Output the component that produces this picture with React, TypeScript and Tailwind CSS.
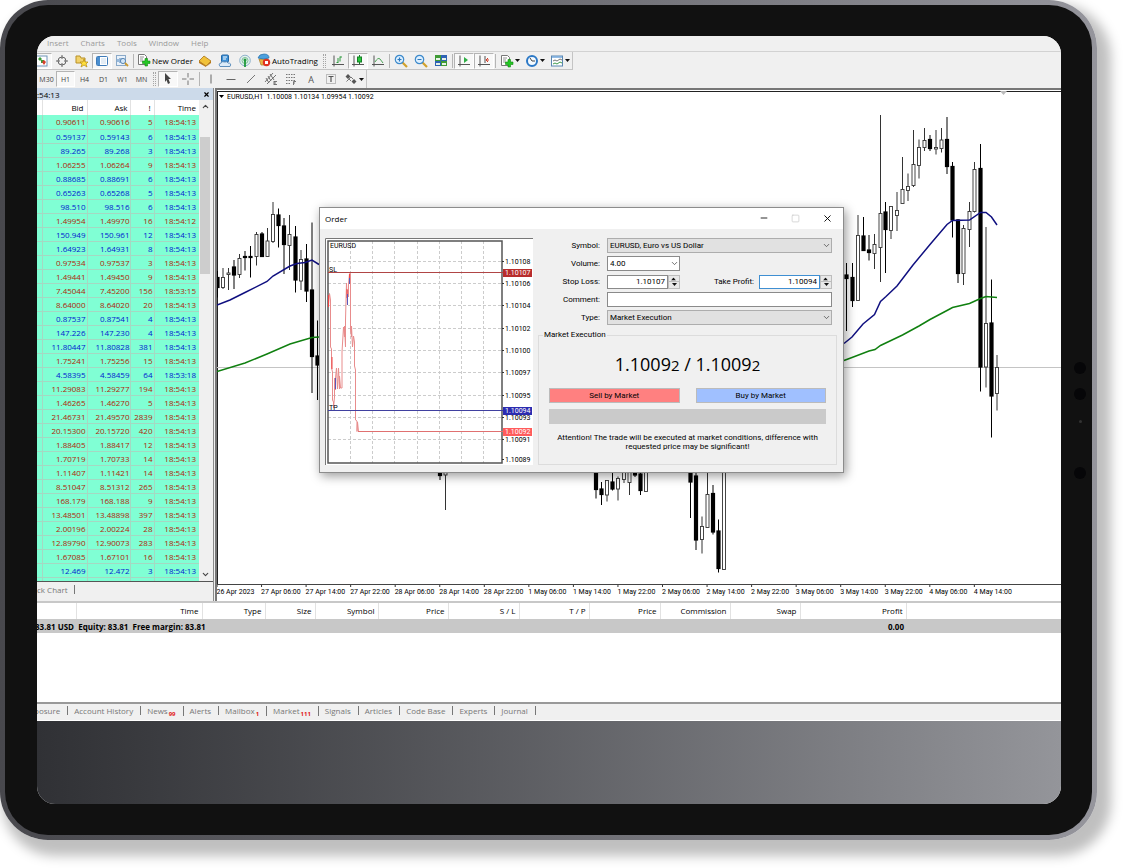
import type { ReactNode } from "react";
import { ChevronDown, ChevronUp, Minus, Square, X } from "lucide-react";

type Quote = [bid: string, ask: string, spread: string, time: string, up: boolean];

const quotes: Quote[] = [
  ["0.90611", "0.90616", "5", "18:54:13", false],
  ["0.59137", "0.59143", "6", "18:54:13", true],
  ["89.265", "89.268", "3", "18:54:13", true],
  ["1.06255", "1.06264", "9", "18:54:13", false],
  ["0.88685", "0.88691", "6", "18:54:13", true],
  ["0.65263", "0.65268", "5", "18:54:13", true],
  ["98.510", "98.516", "6", "18:54:13", true],
  ["1.49954", "1.49970", "16", "18:54:12", false],
  ["150.949", "150.961", "12", "18:54:13", true],
  ["1.64923", "1.64931", "8", "18:54:13", true],
  ["0.97534", "0.97537", "3", "18:54:13", false],
  ["1.49441", "1.49450", "9", "18:54:13", false],
  ["7.45044", "7.45200", "156", "18:53:15", false],
  ["8.64000", "8.64020", "20", "18:54:13", false],
  ["0.87537", "0.87541", "4", "18:54:13", true],
  ["147.226", "147.230", "4", "18:54:13", true],
  ["11.80447", "11.80828", "381", "18:54:13", true],
  ["1.75241", "1.75256", "15", "18:54:13", false],
  ["4.58395", "4.58459", "64", "18:53:18", true],
  ["11.29083", "11.29277", "194", "18:54:13", false],
  ["1.46265", "1.46270", "5", "18:54:13", false],
  ["21.46731", "21.49570", "2839", "18:54:13", false],
  ["20.15300", "20.15720", "420", "18:54:13", false],
  ["1.88405", "1.88417", "12", "18:54:13", false],
  ["1.70719", "1.70733", "14", "18:54:13", false],
  ["1.11407", "1.11421", "14", "18:54:13", false],
  ["8.51047", "8.51312", "265", "18:54:13", false],
  ["168.179", "168.188", "9", "18:54:13", false],
  ["13.48501", "13.48898", "397", "18:54:13", false],
  ["2.00196", "2.00224", "28", "18:54:13", false],
  ["12.89790", "12.90073", "283", "18:54:13", false],
  ["1.67085", "1.67101", "16", "18:54:13", false],
  ["12.469", "12.472", "3", "18:54:13", true],
  ["0.95621", "0.95661", "40", "18:54:13", true],
];

// x, high, body top, body bottom, low, bearish
type Candle = [number, number, number, number, number, 0 | 1];

const candles: Candle[] = [
  [217.5, 271, 277.5, 287.5, 297.5, 1], [223, 268, 277.5, 287.5, 289, 0], [228.5, 268, 273, 274.5, 290, 0],
  [234, 260, 267, 275, 289, 1], [239.5, 254, 258.5, 274.5, 278, 0], [245, 251, 256.5, 257.5, 270.5, 1],
  [250.5, 246, 256.5, 257.5, 277.5, 1], [256.5, 232, 234.5, 256.5, 265.5, 0], [262, 232, 234, 256.5, 257, 1],
  [267.5, 228, 241, 256.5, 257, 0], [273, 202, 214.5, 241.5, 243, 0], [278.5, 208.5, 215, 225.5, 247.5, 1],
  [284, 218, 226, 244.5, 274, 1], [289.5, 215, 234.5, 245.5, 270, 0], [295.5, 226, 237, 280, 292.5, 1],
  [301, 250, 259.5, 281, 290, 0], [306.5, 244, 259, 291, 302, 1], [312, 222.5, 290, 356.5, 393, 1],
  [317.5, 320.5, 356, 365, 400, 1],
  [440, 470, 470, 475.5, 480, 1], [445.5, 470, 470, 475, 510, 0],
  [596, 470, 470, 489.5, 498.5, 1], [601.5, 482, 489, 494.5, 505, 1], [607, 480, 480.5, 495, 501.5, 0],
  [612.5, 472, 482, 489, 490.5, 1], [618, 476.5, 478.5, 489, 500.5, 0], [624, 470, 470, 479.5, 483, 0],
  [629.5, 470, 470, 482.5, 495, 0], [635, 470, 470, 475, 477, 1], [640.5, 472.5, 474, 490.5, 495, 1],
  [646, 470, 470, 491.5, 491.5, 0],
  [690.5, 470, 470, 482, 518, 1], [696, 470, 476, 540, 550, 1], [702, 516.5, 526.5, 539.5, 553.5, 0],
  [707.5, 470, 494.5, 527.5, 527.5, 0], [713, 485, 493.5, 532, 534.5, 1], [718.5, 519.5, 531, 568.5, 572.5, 1],
  [724, 470, 470, 569.5, 569.5, 0],
  [846.5, 263, 275, 278.5, 331, 1], [852.5, 263, 277.5, 300.5, 307, 1], [858, 215, 235.5, 300.5, 300.5, 0],
  [863.5, 217, 236, 250.5, 250.5, 1], [869, 235, 250, 252.5, 260.5, 1], [874.5, 234, 244.5, 253.5, 269, 0],
  [880.5, 115, 213.5, 247.5, 282, 0], [885.5, 202, 212, 229.5, 273, 1], [891, 206, 206.5, 230.5, 239, 0],
  [897, 192, 210.5, 215.5, 231, 0], [902.5, 157, 189.5, 203.5, 203.5, 0], [908, 173.5, 186.5, 190.5, 201, 0],
  [913.5, 130, 164.5, 185.5, 187, 0], [919, 139.5, 147.5, 165.5, 178.5, 0], [924.5, 128, 140.5, 147.5, 151, 0],
  [930, 135, 139.5, 148.5, 151, 1], [936, 130, 147.5, 149, 154.5, 0], [941.5, 128, 140, 148.5, 152.5, 0],
  [947, 117, 139.5, 166.5, 174, 1], [952.5, 162, 166.5, 220, 237.5, 1], [958, 219, 220, 273.5, 283, 1],
  [963.5, 225, 228.5, 273.5, 285, 0], [969.5, 202, 211.5, 229.5, 247, 0], [974.5, 162, 169.5, 211.5, 212.5, 0],
  [980.5, 144, 168.5, 367, 391.5, 1], [986, 227, 323.5, 367, 387.5, 0], [991.5, 279.5, 323, 396, 437.5, 1],
  [997, 355, 367.5, 393.5, 410.5, 0],
];

const timeTicks = [
  "26 Apr 2023", "27 Apr 06:00", "27 Apr 14:00", "27 Apr 22:00", "28 Apr 06:00", "28 Apr 14:00",
  "28 Apr 22:00", "1 May 06:00", "1 May 14:00", "1 May 22:00", "2 May 06:00", "2 May 14:00",
  "2 May 22:00", "3 May 06:00", "3 May 14:00", "3 May 22:00", "4 May 06:00", "4 May 14:00",
];

const menus = ["Insert", "Charts", "Tools", "Window", "Help"];
const periods = ["M30", "H1", "H4", "D1", "W1", "MN"];

const terminalTabs: { label: string; badge?: string }[] = [
  { label: "posure" },
  { label: "Account History" },
  { label: "News", badge: "99" },
  { label: "Alerts" },
  { label: "Mailbox", badge: "1" },
  { label: "Market", badge: "111" },
  { label: "Signals" },
  { label: "Articles" },
  { label: "Code Base" },
  { label: "Experts" },
  { label: "Journal" },
];

const icons: Record<string, ReactNode> = {
  watch: (
    <>
      <rect x="1" y="2" width="11" height="10" fill="#fff" stroke="#6f93b8" />
      <path d="M3 5l2-2 2 2-2 2zM6 6h3v3H6z" fill="#3b9b3b" />
      <path d="M7 8l2-2 2 2-2 3z" fill="#d6402c" />
    </>
  ),
  target: (
    <g fill="none" stroke="#666">
      <circle cx="7" cy="7" r="4" />
      <path d="M7 1v4M7 9v4M1 7h4M9 7h4" />
    </g>
  ),
  folder: (
    <>
      <path d="M1 2h4l1 2h4v5H1z" fill="#f2d26b" stroke="#b89128" />
      <path d="M9 5l1 3h3l-2 2 1 3-3-2-3 2 1-3-2-2h3z" fill="#ffdf3d" stroke="#b58a10" strokeWidth=".7" />
    </>
  ),
  panel: (
    <>
      <rect x="1.5" y="2.5" width="11" height="9" rx="1" fill="#fff" stroke="#3d7ab8" />
      <path d="M2 3h3v8H2z" fill="#4b8fd0" />
      <path d="M6 5h5M6 7h5M6 9h5" stroke="#b9cfe5" strokeWidth=".8" />
    </>
  ),
  tester: (
    <>
      <rect x="1.5" y="1.5" width="9" height="10" fill="#e8f1fa" stroke="#8aa9c8" />
      <path d="M3 8V5M5 9V4M7 7V4" stroke="#4681bc" />
      <circle cx="8" cy="7" r="2.6" fill="#cfe5f8" stroke="#5c88b4" />
      <path d="M10 9l3 3" stroke="#c99b32" strokeWidth="1.8" />
    </>
  ),
  order: (
    <>
      <path d="M1.500 1.500h6l2 2v8h-8z" fill="#fff" stroke="#777" />
      <path d="M3 4h4M3 6h3M3 8h3" stroke="#888" strokeWidth=".9" />
      <path d="M8 5.500h2.500V8H13v2.500h-2.500V13H8v-2.500H5.500V8H8z" fill="#24c724" stroke="#138a13" strokeWidth=".6" />
    </>
  ),
  book: (
    <>
      <path d="M1 7l5-5 7 5-5 5z" fill="#f1c23a" stroke="#a7741a" strokeWidth=".8" />
      <path d="M1 7v2l7 4v-1zM13 7v2l-5 4" fill="#b97816" />
    </>
  ),
  vps: (
    <>
      <rect x="3.500" y="1" width="7" height="7" rx="1" fill="#3f92d8" stroke="#2367a6" />
      <path d="M5 3h4M5 5h3" stroke="#fff" />
      <path d="M2 12.500q-2-3 1-3.500 1-2 4-1 2-1 3 1 4 0 2 3.500z" fill="#dcebf8" stroke="#5e8fbd" />
    </>
  ),
  signal: (
    <>
      <g fill="none" stroke="#8fb2cc">
        <circle cx="7" cy="6.500" r="5.300" fill="#e2f1ec" />
        <circle cx="7" cy="6.500" r="3" stroke="#7bbd98" />
      </g>
      <path d="M7 6v7" stroke="#1f9a3c" strokeWidth="1.800" />
      <circle cx="7" cy="6" r="1.500" fill="#1f9a3c" />
    </>
  ),
  robot: (
    <>
      <path d="M2 6h9l-1 6H4z" fill="#e9b446" stroke="#a87f27" strokeWidth=".7" />
      <path d="M1 5q1-4 6-4t5 4q-5 2-11 0z" fill="#4ba0dd" stroke="#2a6fa8" strokeWidth=".7" />
      <circle cx="9.500" cy="9.500" r="3.700" fill="#e03220" />
      <rect x="8" y="8" width="3" height="3" fill="#fff" />
    </>
  ),
  bars: (
    <>
      <path d="M3 1.500v11M1 10.500h12" stroke="#555" />
      <path d="M7 4v5M5.500 8.500H7M9 2.500v5M9 3h2" stroke="#2f9a3f" />
    </>
  ),
  candle: (
    <>
      <path d="M3 1.500v11M1 10.500h12" stroke="#555" />
      <path d="M8.500 1v9" stroke="#157d25" />
      <rect x="6.500" y="3" width="4" height="5" fill="#27c93c" stroke="#157d25" />
    </>
  ),
  line: (
    <>
      <path d="M3 1.500v11M1 10.500h12" stroke="#555" />
      <path d="M4 8q3-5 5-3l3 4" fill="none" stroke="#4ca457" />
    </>
  ),
  zoomIn: (
    <>
      <path d="M8 8l5 5" stroke="#d1a12c" strokeWidth="2.200" />
      <circle cx="5.500" cy="5.500" r="4.200" fill="#dcefff" stroke="#3d8acb" strokeWidth="1.200" />
      <path d="M3.500 5.500h4M5.500 3.500v4" stroke="#2d78bc" strokeWidth="1.200" />
    </>
  ),
  zoomOut: (
    <>
      <path d="M8 8l5 5" stroke="#d1a12c" strokeWidth="2.200" />
      <circle cx="5.500" cy="5.500" r="4.200" fill="#dcefff" stroke="#3d8acb" strokeWidth="1.200" />
      <path d="M3.500 5.500h4" stroke="#2d78bc" strokeWidth="1.200" />
    </>
  ),
  tile: (
    <>
      <path d="M1 1h6v6H1zM7 7h6v5H7z" fill="#3f9a35" />
      <path d="M7 1h6v6H7zM1 7h6v5H1z" fill="#2e62b4" />
      <path d="M2 4h4v2H2zM8 4h4v2H8zM2 9h4v2H2zM8 9h4v2H8z" fill="#e6f2e6" />
    </>
  ),
  shift: (
    <>
      <path d="M3 1.500v11M1 10.500h12" stroke="#555" />
      <path d="M7 3l4 3-4 3z" fill="#2fae45" />
    </>
  ),
  autoScroll: (
    <>
      <path d="M3 1.500v11M1 10.500h12M8 2v7" stroke="#555" />
      <path d="M12 6H9M11 4L9 6l2 2" fill="none" stroke="#d33a25" />
    </>
  ),
  clock: (
    <>
      <circle cx="7" cy="7" r="5" fill="#f4faff" stroke="#2b78c6" strokeWidth="2" />
      <path d="M5 4l2 3h3" fill="none" stroke="#444" />
    </>
  ),
  template: (
    <>
      <rect x="1.500" y="2" width="11" height="10" fill="#fff" stroke="#5a86b0" />
      <path d="M2 3h10" stroke="#72a7dc" strokeWidth="1.600" />
      <path d="M3 7l2-1 2 1 3-2 2 1" fill="none" stroke="#777" />
      <path d="M3 10l2-1 2 1 3-2 2 1" fill="none" stroke="#3f9a4a" />
    </>
  ),
  cursor: <path d="M4 1l6 6H7.500L9 11l-2 1-1.500-4L4 10z" fill="#444" />,
  cross: <path d="M7 1v4.500M7 8.500V13M1 7h4.500M8.500 7H13" stroke="#777" />,
  vline: <path d="M7 2.500v9" stroke="#666" />,
  hline: <path d="M2.500 7.500h9" stroke="#666" />,
  slash: <path d="M3 11l8-8" stroke="#777" />,
  channel: (
    <path d="M1 10L9 1M3 12l9-9M2 6l3 5M4 4l3 5M6 2l4 6M10 9v4M10 9.500h3M10 11h2M10 12.500h3" fill="none" stroke="#666" strokeWidth=".9" />
  ),
  fibo: (
    <g stroke="#777">
      <path d="M2 2.500h10M2 5.500h10M2 8.500h10M2 11.500h5" strokeDasharray="1.500 1" />
      <path d="M9.500 13V9.500H12M9.500 11H11" fill="none" />
    </g>
  ),
  label: (
    <>
      <rect x="2.500" y="2.500" width="9" height="9" fill="none" stroke="#888" strokeDasharray="1 1" />
      <path d="M4.500 4.500h5M7 4.500V10" stroke="#555" strokeWidth="1.200" />
    </>
  ),
  arrows: (
    <>
      <path d="M4 2l2.500 2.500L4 7 1.500 4.500zM10 7l2.500 2.500L10 12 7.500 9.500z" fill="#555" />
      <path d="M2.500 9.500L7 5l2 2M7 9l-2-2" fill="none" stroke="#777" />
    </>
  ),
};

function ToolButton({ icon, label, pressed, drop }: { icon: string; label: string; pressed?: boolean; drop?: boolean }) {
  return (
    <button
      aria-label={label}
      className={`flex h-4 shrink-0 items-center justify-center ${drop ? "w-[25px] gap-px" : "w-5"} ${
        pressed ? "border border-[#b4b4b4] border-r-white border-b-white bg-[#f8f8f8]" : ""
      }`}
    >
      <svg viewBox="0 0 14 14" className="size-[14px] shrink-0">
        {icons[icon]}
      </svg>
      {drop && <Caret />}
    </button>
  );
}

function Caret() {
  return (
    <svg viewBox="0 0 5 3" className="h-[3px] w-[5px] shrink-0">
      <path d="M0 0h5L2.500 3z" fill="#111" />
    </svg>
  );
}

function Divider() {
  return <span className="mx-px h-[14px] w-px shrink-0 bg-[#b5b5b5]" />;
}

function Grip() {
  return <span className="mx-[2px] h-[14px] w-[3px] shrink-0 border-x border-dotted border-[#a5a5a5]" />;
}

function Toolbars() {
  return (
    <header className="bg-[#f0f0f0]">
      <nav className="flex h-[15px] items-center gap-3 pb-[2px] pl-[10px] text-[8px] text-[#9a9a9a]">
        {menus.map((m) => (
          <button key={m}>{m}</button>
        ))}
      </nav>
      <div className="flex border-t border-[#d2d2d2]">
        <div className="-ml-[5px] flex h-[18px] items-center border-r border-b border-[#c4c4c4]">
          <ToolButton icon="watch" label="Market Watch" pressed />
          <ToolButton icon="target" label="Data Window" />
          <ToolButton icon="folder" label="Navigator" />
          <ToolButton icon="panel" label="Terminal" pressed />
          <ToolButton icon="tester" label="Strategy Tester" />
          <Divider />
          <button className="flex w-[60px] shrink-0 items-center gap-px pb-px pl-[2px] text-[8px] whitespace-nowrap text-black">
            <svg viewBox="0 0 14 14" className="size-[14px] shrink-0">{icons.order}</svg>
            New Order
          </button>
          <ToolButton icon="book" label="MetaEditor" />
          <ToolButton icon="vps" label="VPS" />
          <ToolButton icon="signal" label="Signals" />
          <button className="flex w-[66px] shrink-0 items-center gap-px pb-px pl-[2px] text-[8px] whitespace-nowrap text-black">
            <svg viewBox="0 0 14 14" className="size-[14px] shrink-0">{icons.robot}</svg>
            AutoTrading
          </button>
          <Grip />
          <ToolButton icon="bars" label="Bar Chart" />
          <ToolButton icon="candle" label="Candlesticks" pressed />
          <ToolButton icon="line" label="Line Chart" />
          <Divider />
          <ToolButton icon="zoomIn" label="Zoom In" />
          <ToolButton icon="zoomOut" label="Zoom Out" />
          <ToolButton icon="tile" label="Tile Windows" />
          <Divider />
          <ToolButton icon="shift" label="Auto Scroll" pressed />
          <ToolButton icon="autoScroll" label="Chart Shift" pressed />
          <Divider />
          <ToolButton icon="order" label="Indicators" drop />
          <ToolButton icon="clock" label="Periods" drop />
          <ToolButton icon="template" label="Templates" drop />
        </div>
      </div>
      <div className="flex">
        <div className="flex h-[18px] items-center border-r border-[#c4c4c4]">
          {periods.map((p) => (
            <button
              key={p}
              className={`h-4 w-[19px] shrink-0 text-[7px] text-[#444] ${
                p === "H1" ? "border border-[#b4b4b4] border-r-white border-b-white bg-[#f8f8f8]" : ""
              }`}
            >
              {p}
            </button>
          ))}
          <Grip />
          <ToolButton icon="cursor" label="Cursor" pressed />
          <ToolButton icon="cross" label="Crosshair" />
          <Divider />
          <ToolButton icon="vline" label="Vertical Line" />
          <ToolButton icon="hline" label="Horizontal Line" />
          <ToolButton icon="slash" label="Trendline" />
          <ToolButton icon="channel" label="Channel" />
          <ToolButton icon="fibo" label="Fibonacci" />
          <button className="h-4 w-5 shrink-0 text-[9px] text-[#555]">A</button>
          <ToolButton icon="label" label="Text Label" />
          <ToolButton icon="arrows" label="Arrows" drop />
        </div>
      </div>
    </header>
  );
}

function MarketWatch() {
  return (
    <aside className="flex w-[177px] shrink-0 flex-col overflow-hidden border-r border-[#8a8a8a] bg-[#f0f0f0]">
      <div className="flex h-3 shrink-0 items-center justify-between bg-[#ccdaea] pr-[3px] text-[8px] text-black">
        <span>:54:13</span>
        <button aria-label="Close">
          <X className="size-[7px]" strokeWidth={4} />
        </button>
      </div>
      <div className="flex h-[482px] overflow-hidden border-b border-[#555]">
        <div className="w-[162px] shrink-0">
          <table className="w-full table-fixed text-right">
            <colgroup>
              <col className="w-[5px]" />
              <col className="w-[45px]" />
              <col className="w-[43px]" />
              <col className="w-[24px]" />
              <col className="w-[45px]" />
            </colgroup>
            <thead className="bg-white text-[8px] text-black">
              <tr className="h-[15px]">
                <th className="border-r border-[#e2e2e2] p-0" />
                <th className="border-r border-[#e2e2e2] p-0 pr-[3px] font-normal">Bid</th>
                <th className="border-r border-[#e2e2e2] p-0 pr-[2px] font-normal">Ask</th>
                <th className="border-r border-[#e2e2e2] p-0 pr-[3px] font-normal">!</th>
                <th className="p-0 pr-[3px] font-normal">Time</th>
              </tr>
            </thead>
            <tbody className="bg-[#80ffd4] text-[8px] leading-[13px]">
              {quotes.map(([bid, ask, spread, time, up], i) => (
                <tr key={i} className={`h-[14px] ${up ? "text-[#0018d0]" : "text-[#b02408]"}`}>
                  <td className="border-r border-b border-[#a5d8c2] p-0" />
                  <td className="border-r border-b border-[#a5d8c2] p-0 pr-px">{bid}</td>
                  <td className="border-r border-b border-[#a5d8c2] p-0">{ask}</td>
                  <td className="border-r border-b border-[#a5d8c2] p-0 pr-px">{spread}</td>
                  <td className="border-b border-[#a5d8c2] p-0 pr-[3px]">{time}</td>
                </tr>
              ))}
            </tbody>
          </table>
        </div>
        <div className="flex w-3 flex-col items-center py-[2px] text-[#444]">
          <ChevronUp className="size-[9px] shrink-0" strokeWidth={3} />
          <span className="mt-[26px] h-[137px] w-[10px] bg-[#cdcdcd]" />
          <span className="flex-1" />
          <ChevronDown className="size-[9px] shrink-0" strokeWidth={3} />
        </div>
      </div>
      <div className="flex h-[14px] items-center gap-[6px] text-[8px] text-[#777]">
        <button>ck Chart</button>
        <span className="h-[9px] w-px bg-[#777]" />
      </div>
    </aside>
  );
}

function PriceChart() {
  return (
    <main className="min-w-0 flex-1 overflow-hidden border-t-2 border-l-2 border-[#777] bg-white pt-px">
      <svg viewBox="217 91 844 510" className="block h-[510px] w-[844px]">
        <path d="M217 91.500h844M217.500 91v494" stroke="#222" />
        <path d="M1000 91h7l-3.500 4z" fill="#bbb" />
        <path d="M217 367.500h844" stroke="#c4c4c4" />
        {candles.map(([x, high, top, bottom, low, bearish]) => (
          <g key={x} stroke={bearish ? "#000" : "#333"}>
            <path d={`M${x} ${high}V${top}M${x} ${bottom}V${low}`} />
            <rect
              x={x - 1.5}
              y={top}
              width="3"
              height={bottom - top}
              fill={bearish ? "#000" : "#fff"}
              strokeWidth={bearish ? 1.2 : 0.9}
            />
          </g>
        ))}
        <g fill="none" strokeWidth="1.500">
          <path
            d="M217 305L230 300L245 292.500L267 281.500L273 276L290 266L297 263.500L305 262.500L312 260L319 264.500M844 343.500L852 337L863 324L874.500 314.500L880.500 301.500L886 296.500L897 286L913 265L930 244.500L947 224.500L952.500 220.500L969.500 220L980.500 212.500L986 212.500L991.500 217L997 225"
            stroke="#101080"
          />
          <path
            d="M217 371.500L245 363L267 354L290 344L312 337.500L319 337M844 360.500L852 357.500L869 351L875 349.500L880.500 345.500L891 340.500L902.500 335L919 326L930 319.500L947 310.500L952.500 307.500L969.500 303.500L980.500 298.500L986 296.500L997 297.500"
            stroke="#108010"
          />
        </g>
        <path d="M217 584.500h844" stroke="#444" />
        <g className="font-['Roboto',sans-serif]" fontSize="7" fill="#000">
          <path d="M219 95h5l-2.500 3z" />
          <text x="227" y="99">EURUSD,H1&nbsp; 1.10008 1.10134 1.09954 1.10092</text>
          {timeTicks.map((t, i) => (
            <text key={t} x={216.5 + i * 44.55} y="594">{t}</text>
          ))}
        </g>
        {timeTicks.map((t, i) => (
          <path key={t} d={`M${217 + i * 44.55} 585v2`} stroke="#333" />
        ))}
      </svg>
    </main>
  );
}

const tickLabels: [string, number][] = [
  ["1.10108", 262], ["1.10106", 284], ["1.10104", 306], ["1.10102", 329], ["1.10100", 351], ["1.10097", 373],
  ["1.10095", 396], ["1.10093", 418], ["1.10091", 440], ["1.10089", 460],
];

function TickChart() {
  return (
    <svg viewBox="325 238 208 227" className="h-[227px] w-[208px] shrink-0 font-['Roboto',sans-serif]" fontSize="7">
      <rect x="325" y="238" width="208" height="227" fill="#fff" />
      <path d="M325.500 465V238.500H533" fill="none" stroke="#777" />
      <g stroke="#ccc" strokeDasharray="3 2">
        {[351, 373, 395, 418, 440, 462, 484].map((x) => (
          <path key={x} d={`M${x - 0.5} 241V463`} />
        ))}
        {[262, 284, 306, 329, 351, 373, 396, 418, 440].map((y) => (
          <path key={y} d={`M328 ${y - 0.5}H502`} />
        ))}
      </g>
      <rect x="328" y="241" width="174" height="222" fill="none" stroke="#555" strokeWidth="1.500" />
      <path
        d="M328.500 306L329.500 293.500L330.500 300V347L331.500 349V368L332.500 372V400L333.500 402V408L334.500 397V378L335.500 390V378L336.500 368L337.500 389L338.500 368L339.500 389V376L340.500 388L342 388V352L343.500 327L344.500 337V326L345.500 347V320L346.500 283L347.500 305V290L348.500 297V284L349.500 273.500H350.500V330L351.500 337V326L352.500 347L353.500 336L354.500 342V366L355.500 370V420L357 421V431.500L357.500 422L358.500 431.500"
        fill="none"
        stroke="#e88c8c"
      />
      <path d="M358 431.500h145" stroke="#e07070" />
      <path d="M328.500 295v12M332 357v12M347 289v9M349.500 274v6" stroke="#e44" />
      <path d="M347.500 294v11M349.500 278v6M335.500 378v11" stroke="#5959bb" />
      <path d="M328 272.500h175" stroke="#b04545" />
      <path d="M328 410.500h175" stroke="#4040a0" />
      <text x="330" y="248">EURUSD</text>
      <text x="329" y="272">SL</text>
      <text x="329" y="410">TP</text>
      {tickLabels.map(([t, y]) => (
        <g key={t}>
          <path d={`M502 ${y - 0.5}h2`} stroke="#333" />
          <text x="505" y={y + 2}>{t}</text>
        </g>
      ))}
      <rect x="503" y="269" width="29" height="8" fill="#b82c2c" />
      <rect x="503" y="407" width="29" height="8" fill="#2c2cb0" />
      <rect x="503" y="428" width="29" height="8" fill="#ff5c5c" />
      <g fill="#fff">
        <text x="505" y="275">1.10107</text>
        <text x="505" y="413">1.10094</text>
        <text x="505" y="434">1.10092</text>
      </g>
    </svg>
  );
}

function PriceInput({ id, value, focused }: { id: string; value: string; focused?: boolean }) {
  return (
    <div className="flex h-[14px] w-[73px]">
      <input
        id={id}
        defaultValue={value}
        className={`min-w-0 flex-1 border bg-white pr-[2px] text-right ${focused ? "border-[#3f8fd2]" : "border-[#8a8a8a]"}`}
      />
      <div className="flex w-3 flex-col border border-[#bdbdbd] bg-[#e8e8e8]">
        <button aria-label={`Increase ${id}`} className="flex flex-1 rotate-180 items-center justify-center">
          <Caret />
        </button>
        <button aria-label={`Decrease ${id}`} className="flex flex-1 items-center justify-center border-t border-[#bdbdbd]">
          <Caret />
        </button>
      </div>
    </div>
  );
}

function Dropdown({ id, value, light }: { id: string; value: string; light?: boolean }) {
  return (
    <div className={`relative h-[15px] ${light ? "w-[73px]" : "w-full"}`}>
      <select
        id={id}
        className={`size-full appearance-none border pl-[2px] ${light ? "border-[#8a8a8a] bg-white" : "border-[#adadad] bg-[#e1e1e1]"}`}
      >
        <option>{value}</option>
      </select>
      <ChevronDown className="pointer-events-none absolute top-[3px] right-px size-[9px] text-[#444]" />
    </div>
  );
}

function Price() {
  return (
    <span>
      1.1009<span className="text-[15px]">2</span>
    </span>
  );
}

function OrderDialog() {
  return (
    <section
      role="dialog"
      aria-label="Order"
      className="absolute top-[171px] left-[282px] flex h-[266px] w-[525px] flex-col border border-[#8c8c8c] bg-[#f0f0f0] font-['Roboto',sans-serif] text-[8px] text-black shadow-[2px_3px_10px_rgba(0,0,0,0.4)]"
    >
      <div className="flex h-[21px] shrink-0 items-center bg-white pr-[10px] pb-px pl-[5px]">
        <h2 className="flex-1 font-['Open_Sans',sans-serif]">Order</h2>
        <div className="flex items-center gap-[22px]">
          <button aria-label="Minimize"><Minus className="size-[10px]" strokeWidth={2} /></button>
          <button aria-label="Maximize"><Square className="size-[9px] text-[#ccc]" strokeWidth={2} /></button>
          <button aria-label="Close"><X className="size-[11px]" strokeWidth={2} /></button>
        </div>
      </div>
      <div className="flex min-h-0 flex-1 gap-[5px] pt-[9px] pr-[6px] pl-[5px]">
        <TickChart />
        <div className="flex min-w-0 flex-1 flex-col">
          <form className="grid grid-cols-[62px_1fr] items-center gap-x-[7px] gap-y-[3px] pr-[5px] text-right">
            <label htmlFor="symbol">Symbol:</label>
            <Dropdown id="symbol" value="EURUSD, Euro vs US Dollar" />
            <label htmlFor="volume">Volume:</label>
            <Dropdown id="volume" value="4.00" light />
            <label htmlFor="stop-loss">Stop Loss:</label>
            <div className="flex h-[15px] items-center justify-between">
              <PriceInput id="stop-loss" value="1.10107" />
              <div className="flex items-center gap-[5px]">
                <label htmlFor="take-profit">Take Profit:</label>
                <PriceInput id="take-profit" value="1.10094" focused />
              </div>
            </div>
            <label htmlFor="comment">Comment:</label>
            <input id="comment" className="h-[15px] w-full border border-[#8a8a8a] bg-white px-[2px]" />
            <label htmlFor="type">Type:</label>
            <Dropdown id="type" value="Market Execution" />
          </form>
          <fieldset className="mt-[5px] flex h-[135px] flex-col border border-[#dcdcdc] px-[10px] text-center">
            <legend className="mr-auto -ml-[6px] px-px leading-[10px]">Market Execution</legend>
            <p className="mt-[10px] font-['Open_Sans',sans-serif] text-[18px] leading-[28px]">
              <Price /> / <Price />
            </p>
            <div className="mt-[9px] flex gap-4">
              <button className="h-[15px] flex-1 border border-[#bbb] bg-[#ff8080]">Sell by Market</button>
              <button className="h-[15px] flex-1 border border-[#bbb] bg-[#a0c0ff]">Buy by Market</button>
            </div>
            <div className="mt-[6px] h-[15px] shrink-0 bg-[#cacaca]" />
            <p className="mt-[9px] leading-[9px]">
              Attention! The trade will be executed at market conditions, difference with
              <br />
              requested price may be significant!
            </p>
          </fieldset>
        </div>
      </div>
    </section>
  );
}

function Terminal() {
  return (
    <section className="flex flex-col border-t-2 border-[#c8c8c8] bg-white">
      <div className="h-[99px] overflow-hidden">
        <table className="w-full table-fixed text-right text-[8px] text-black">
          <colgroup>
            <col className="w-[39px]" />
            <col className="w-[126px]" />
            <col className="w-[63px]" />
            <col className="w-[50px]" />
            <col className="w-[63px]" />
            <col className="w-[70px]" />
            <col className="w-[71px]" />
            <col className="w-[70px]" />
            <col className="w-[71px]" />
            <col className="w-[70px]" />
            <col className="w-[70px]" />
            <col className="w-[106px]" />
            <col />
          </colgroup>
          <thead>
            <tr className="h-4">
              {["", "Time", "Type", "Size", "Symbol", "Price", "S / L", "T / P", "Price", "Commission", "Swap", "Profit"].map((h, i) => (
                <th key={i} className="border-r border-[#e2e2e2] p-0 pr-[3px] pb-px font-normal">{h}</th>
              ))}
              <th />
            </tr>
          </thead>
          <tbody>
            <tr className="h-[14px] bg-[#c8c8c8] font-bold">
              <td colSpan={11} className="p-0 text-left whitespace-pre">
                <span className="-ml-[2px]">83.81 USD  Equity: 83.81  Free margin: 83.81</span>
              </td>
              <td className="p-0 pr-[2px]">0.00</td>
              <td />
            </tr>
          </tbody>
        </table>
      </div>
      <div className="flex h-[19px] items-center border-t-2 border-b border-[#999] border-b-white bg-[#f0f0f0] pb-[3px] text-[8px] text-[#777]">
        {terminalTabs.map((tab, i) => (
          <button key={tab.label} className={`flex items-center border-r border-[#777] pr-[7px] leading-[9px] ${i === 0 ? "-ml-[3px]" : "pl-[6px]"}`}>
            {tab.label}
            {tab.badge && <span className="mt-[5px] -mb-[1px] ml-px text-[6px] leading-[6px] font-bold text-[#e01818]">{tab.badge}</span>}
          </button>
        ))}
      </div>
    </section>
  );
}

export default function App() {
  return (
    <div className="flex min-h-screen overflow-hidden bg-white pr-[27px] pb-7 font-['Open_Sans',sans-serif]">
      <div className="relative flex min-w-0 flex-1 rounded-[48px] bg-linear-to-r from-[#48484d] to-[#95959c] p-[5px] shadow-[8px_10px_12px_6px_rgba(0,0,0,0.25)]">
        <div className="flex min-w-0 flex-1 rounded-[43px] bg-[#111] py-[31px] pr-[31px] pl-8">
          <div className="relative flex min-w-0 flex-1 flex-col overflow-hidden rounded-[18px] bg-[#f0f0f0] leading-[11px]">
            <Toolbars />
            <div className="flex h-[513px] gap-px">
              <MarketWatch />
              <PriceChart />
            </div>
            <Terminal />
            <div className="flex-1 bg-linear-to-r from-[#303135] to-[#94959a]" />
            <OrderDialog />
          </div>
        </div>
        {/* camera and sensors in the bezel */}
        <div className="absolute top-[362px] right-[11px] flex flex-col items-center gap-[14px]">
          <span className="size-3 rounded-full bg-[#060608]" />
          <span className="size-3 rounded-full bg-[#060608]" />
          <span className="mt-[6px] size-[3px] rounded-full bg-[#333]" />
          <span className="mt-[30px] size-3 rounded-full bg-[#060608]" />
        </div>
      </div>
    </div>
  );
}
